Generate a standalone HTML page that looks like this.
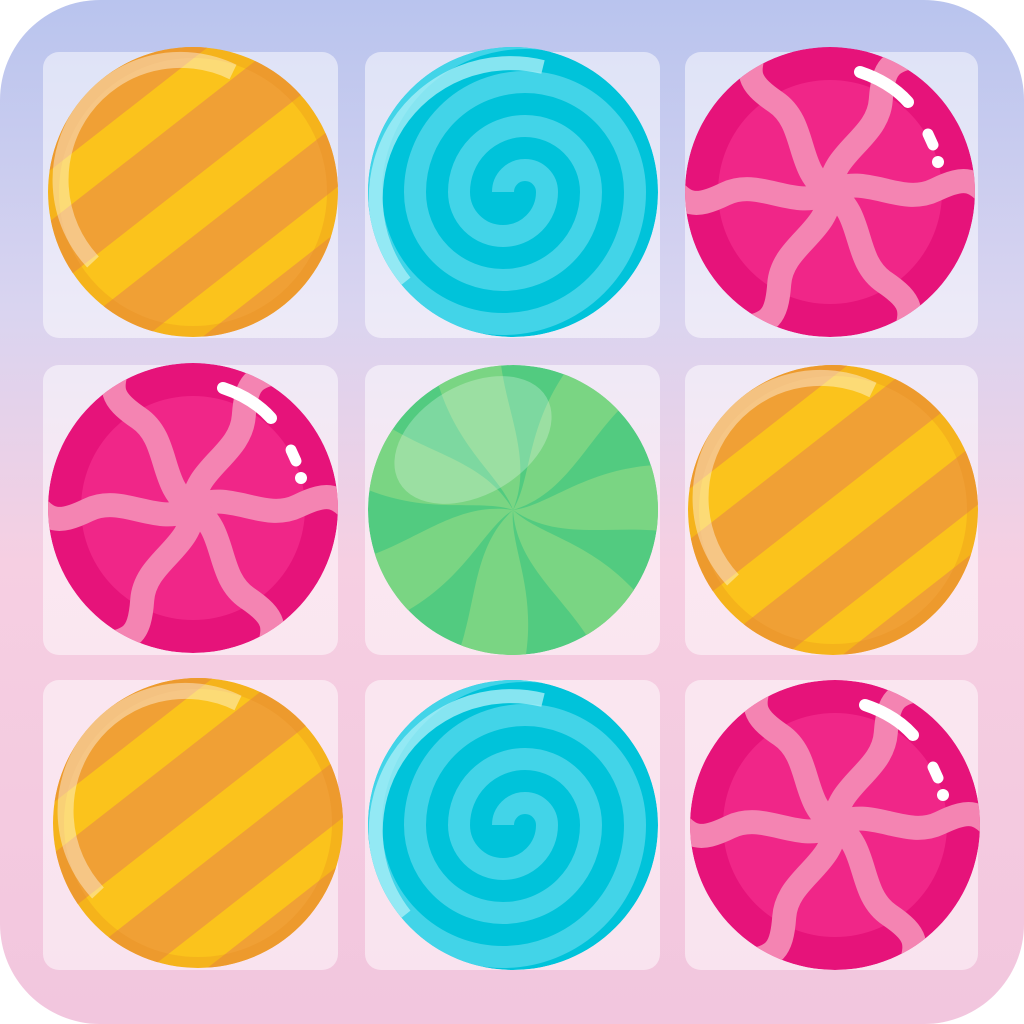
<!DOCTYPE html>
<html><head><meta charset="utf-8"><style>
html,body{margin:0;padding:0;background:#fff;width:1024px;height:1024px;overflow:hidden}
svg{display:block}
</style></head><body>
<svg width="1024" height="1024" viewBox="0 0 1024 1024" xmlns="http://www.w3.org/2000/svg">
<defs>
<clipPath id="app"><rect x="0" y="0" width="1024" height="1024" rx="100"/></clipPath>
<clipPath id="cc"><circle cx="0" cy="0" r="145"/></clipPath>
<linearGradient id="bg" x1="0" y1="0" x2="0" y2="1">
<stop offset="0" stop-color="#b9c4ee"/><stop offset="0.3" stop-color="#d9d4f0"/>
<stop offset="0.55" stop-color="#f6cfe2"/><stop offset="1" stop-color="#f2c6de"/>
</linearGradient>
<g id="yellow">
<g clip-path="url(#cc)">
<circle r="145" fill="#fbc31c"/>
<g transform="rotate(-38)" fill="#f0a035">
<rect x="-200" y="-150" width="400" height="45"/>
<rect x="-200" y="-65" width="400" height="55"/>
<rect x="-200" y="35" width="400" height="50"/>
<rect x="-200" y="120" width="400" height="60"/>
</g>
<circle r="145" fill="none" stroke="#e8901c" stroke-opacity="0.3" stroke-width="22"/>
<path d="M-100 70 A120 120 0 0 1 40 -120" fill="none" stroke="#fff" stroke-opacity="0.4" stroke-width="16"/>
</g>
</g>
<g id="blue">
<g clip-path="url(#cc)">
<circle r="145" fill="#00c3da"/>
<path d="M0 0 a22 22 0 0 1 44 0 a44 44 0 0 1 -88 0 a66 66 0 0 1 132 0 a88 88 0 0 1 -176 0 a110 110 0 0 1 220 0 a132 132 0 0 1 -264 0 a154 154 0 0 1 308 0" fill="none" stroke="#42d4e8" stroke-width="22" transform="translate(-10,0)"/>
<path d="M-108 90 A135 135 0 0 1 30 -125" fill="none" stroke="#a8eef6" stroke-opacity="0.8" stroke-width="14"/>
</g>
</g>
<g id="rib"><path d="M0 0 C35 -20 70 15 105 -2 S145 -10 165 10" fill="none" stroke="#f484b2" stroke-width="24"/></g>
<g id="pink">
<g clip-path="url(#cc)">
<circle r="145" fill="#e6137a"/>
<circle r="112" fill="#f02688"/>
<use href="#rib"/><use href="#rib" transform="rotate(60)"/><use href="#rib" transform="rotate(120)"/>
<use href="#rib" transform="rotate(180)"/><use href="#rib" transform="rotate(240)"/><use href="#rib" transform="rotate(300)"/>
<path d="M30 -120 Q60 -110 78 -90" fill="none" stroke="#fff" stroke-width="12" stroke-linecap="round"/>
<line x1="98" y1="-58" x2="103" y2="-47" stroke="#fff" stroke-width="11" stroke-linecap="round"/>
<circle cx="108" cy="-30" r="6" fill="#fff"/>
</g>
</g>
<g id="blade"><path d="M0 0 C40 -5 80 -50 170 -45 L170 25 C110 10 50 35 0 0 Z" fill="#7ad583"/></g>
<g id="green">
<g clip-path="url(#cc)">
<circle r="145" fill="#52cb80"/>
<use href="#blade"/><use href="#blade" transform="rotate(51.4)"/><use href="#blade" transform="rotate(102.8)"/>
<use href="#blade" transform="rotate(154.2)"/><use href="#blade" transform="rotate(205.7)"/><use href="#blade" transform="rotate(257.1)"/><use href="#blade" transform="rotate(308.5)"/>
<ellipse cx="-40" cy="-70" rx="85" ry="55" transform="rotate(-30 -40 -70)" fill="#fff" fill-opacity="0.25"/>
</g>
</g>
</defs>
<g clip-path="url(#app)">
<rect width="1024" height="1024" fill="url(#bg)"/>
<g fill="#fff" fill-opacity="0.5">
<rect x="43" y="52" width="295" height="286" rx="16"/>
<rect x="365" y="52" width="295" height="286" rx="16"/>
<rect x="685" y="52" width="293" height="286" rx="16"/>
<rect x="43" y="365" width="295" height="290" rx="16"/>
<rect x="365" y="365" width="295" height="290" rx="16"/>
<rect x="685" y="365" width="293" height="290" rx="16"/>
<rect x="43" y="680" width="295" height="290" rx="16"/>
<rect x="365" y="680" width="295" height="290" rx="16"/>
<rect x="685" y="680" width="293" height="290" rx="16"/>
</g>
<use href="#yellow" transform="translate(193,192)"/>
<use href="#blue" transform="translate(513,192)"/>
<use href="#pink" transform="translate(830,192)"/>
<use href="#pink" transform="translate(193,508)"/>
<use href="#green" transform="translate(513,510)"/>
<use href="#yellow" transform="translate(833,510)"/>
<use href="#yellow" transform="translate(198,823)"/>
<use href="#blue" transform="translate(513,825)"/>
<use href="#pink" transform="translate(835,825)"/>
</g>
</svg>
</body></html>
